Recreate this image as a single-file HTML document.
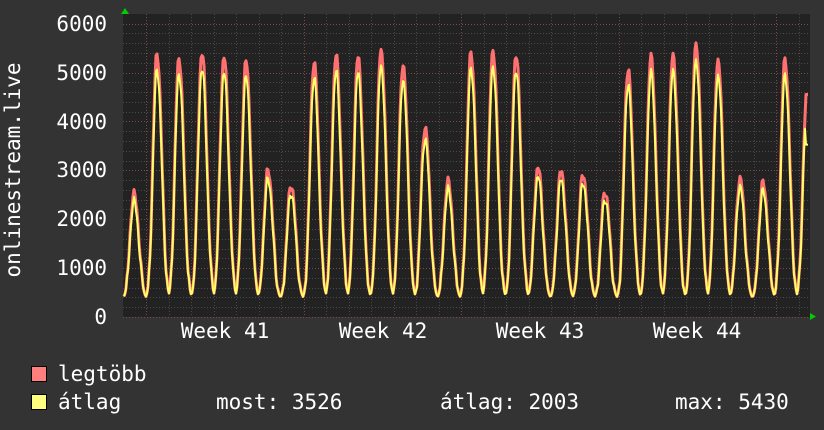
<!DOCTYPE html>
<html><head><meta charset="utf-8">
<style>
html,body{margin:0;padding:0;background:#333;}
body{width:824px;height:430px;overflow:hidden;}
svg{display:block;}
svg text{font-family:"DejaVu Sans Mono","Liberation Mono",monospace;font-size:21px;fill:#fff;}
</style></head>
<body>
<svg id="s" width="824" height="430" xmlns="http://www.w3.org/2000/svg">
<rect x="0" y="0" width="824" height="430" fill="#333"/>
<rect x="123" y="14" width="687" height="303" fill="#222"/>
<g id="grid"></g>
<g id="data"></g>
<polygon points="121,14 125,8 129,14" fill="#0c0"/>
<polygon points="810,313 816,316.5 810,320" fill="#0c0"/>
<text x="107" y="31" text-anchor="end">6000</text>
<text x="107" y="80" text-anchor="end">5000</text>
<text x="107" y="129" text-anchor="end">4000</text>
<text x="107" y="177" text-anchor="end">3000</text>
<text x="107" y="226" text-anchor="end">2000</text>
<text x="107" y="275" text-anchor="end">1000</text>
<text x="107" y="324" text-anchor="end">0</text>
<text x="225" y="338" text-anchor="middle">Week 41</text>
<text x="383" y="338" text-anchor="middle">Week 42</text>
<text x="540" y="338" text-anchor="middle">Week 43</text>
<text x="697" y="338" text-anchor="middle">Week 44</text>
<text transform="translate(20,170) rotate(-90)" text-anchor="middle">onlinestream.live</text>
<rect x="31.5" y="366.5" width="15" height="15" fill="#ff7f7f" stroke="#000"/>
<rect x="31.5" y="394.5" width="15" height="15" fill="#ffff7f" stroke="#000"/>
<text x="58" y="381">legtöbb</text>
<text x="58" y="409">átlag</text>
<text x="216" y="409">most: 3526</text>
<text x="440" y="409">átlag: 2003</text>
<text x="675" y="409">max: 5430</text>
</svg>
<script>
(function(){
var NS="http://www.w3.org/2000/svg";
var g=document.getElementById('grid'),d=document.getElementById('data');
function ln(x1,y1,x2,y2,c){var l=document.createElementNS(NS,'line');l.setAttribute('x1',x1);l.setAttribute('y1',y1);l.setAttribute('x2',x2);l.setAttribute('y2',y2);l.setAttribute('stroke',c);l.setAttribute('stroke-width',1);l.setAttribute('stroke-dasharray','1,2');g.appendChild(l);}
var y0=317,k=0.0489;
for(var v=0;v<=6000;v+=200){var y=Math.round(y0-v*k)+0.5;ln(123,y,810,y,v%1000==0?'#7a4a4a':'#4a4a4a');}
for(var x=146;x<810;x+=22.5){var X=Math.round(x)+0.5;ln(X,14,X,317,'#4a4a4a');}
for(var x=146;x<810;x+=157.5){var X=Math.round(x)+0.5;ln(X,14,X,317,'#7a4a4a');}
var peaks=[[134,2520],[157,5380],[179,5300],[202,5420],[224,5320],[246,5230],[268,3000],[291,2700],
[314,5200],[336,5350],[358,5320],[381,5470],[403,5170],[425,3880],[448,2780],
[471,5400],[493,5450],[516,5370],[538,3060],[561,3000],[583,2920],[605,2570],
[628,5060],[651,5320],[673,5350],[696,5600],[718,5260],[740,2830],[763,2750],[785,5260],[807,4550]];
function val(x,avg){var s=0;
 for(var i=0;i<peaks.length;i++){var p=peaks[i],dx=x-p[0];
  var w=dx<0?5.5:6.5;var b=Math.exp(-Math.pow(Math.abs(dx)/w,2.2));
  var pk=avg?p[1]*0.94:p[1];s=Math.max(s,b*(pk-380));}
 var n=Math.sin(x*1.7)*60+Math.sin(x*0.9)*40;
 return 370+s+(s>300?n:0);}
function path(avg){var pts=[];for(var x=124;x<=808;x+=1){var v=val(x,avg);if(x>=806)v=avg?3526:4550;pts.push(x+','+(y0-v*k).toFixed(1));}return pts.join(' ');}
function pl(pts,c,w){var p=document.createElementNS(NS,'polyline');p.setAttribute('points',pts);p.setAttribute('fill','none');p.setAttribute('stroke',c);p.setAttribute('stroke-width',w);p.setAttribute('stroke-linejoin','round');d.appendChild(p);}
pl(path(false),'#ff7070',3);
pl(path(true),'#ffff66',2);
})();
</script>
</body></html>
